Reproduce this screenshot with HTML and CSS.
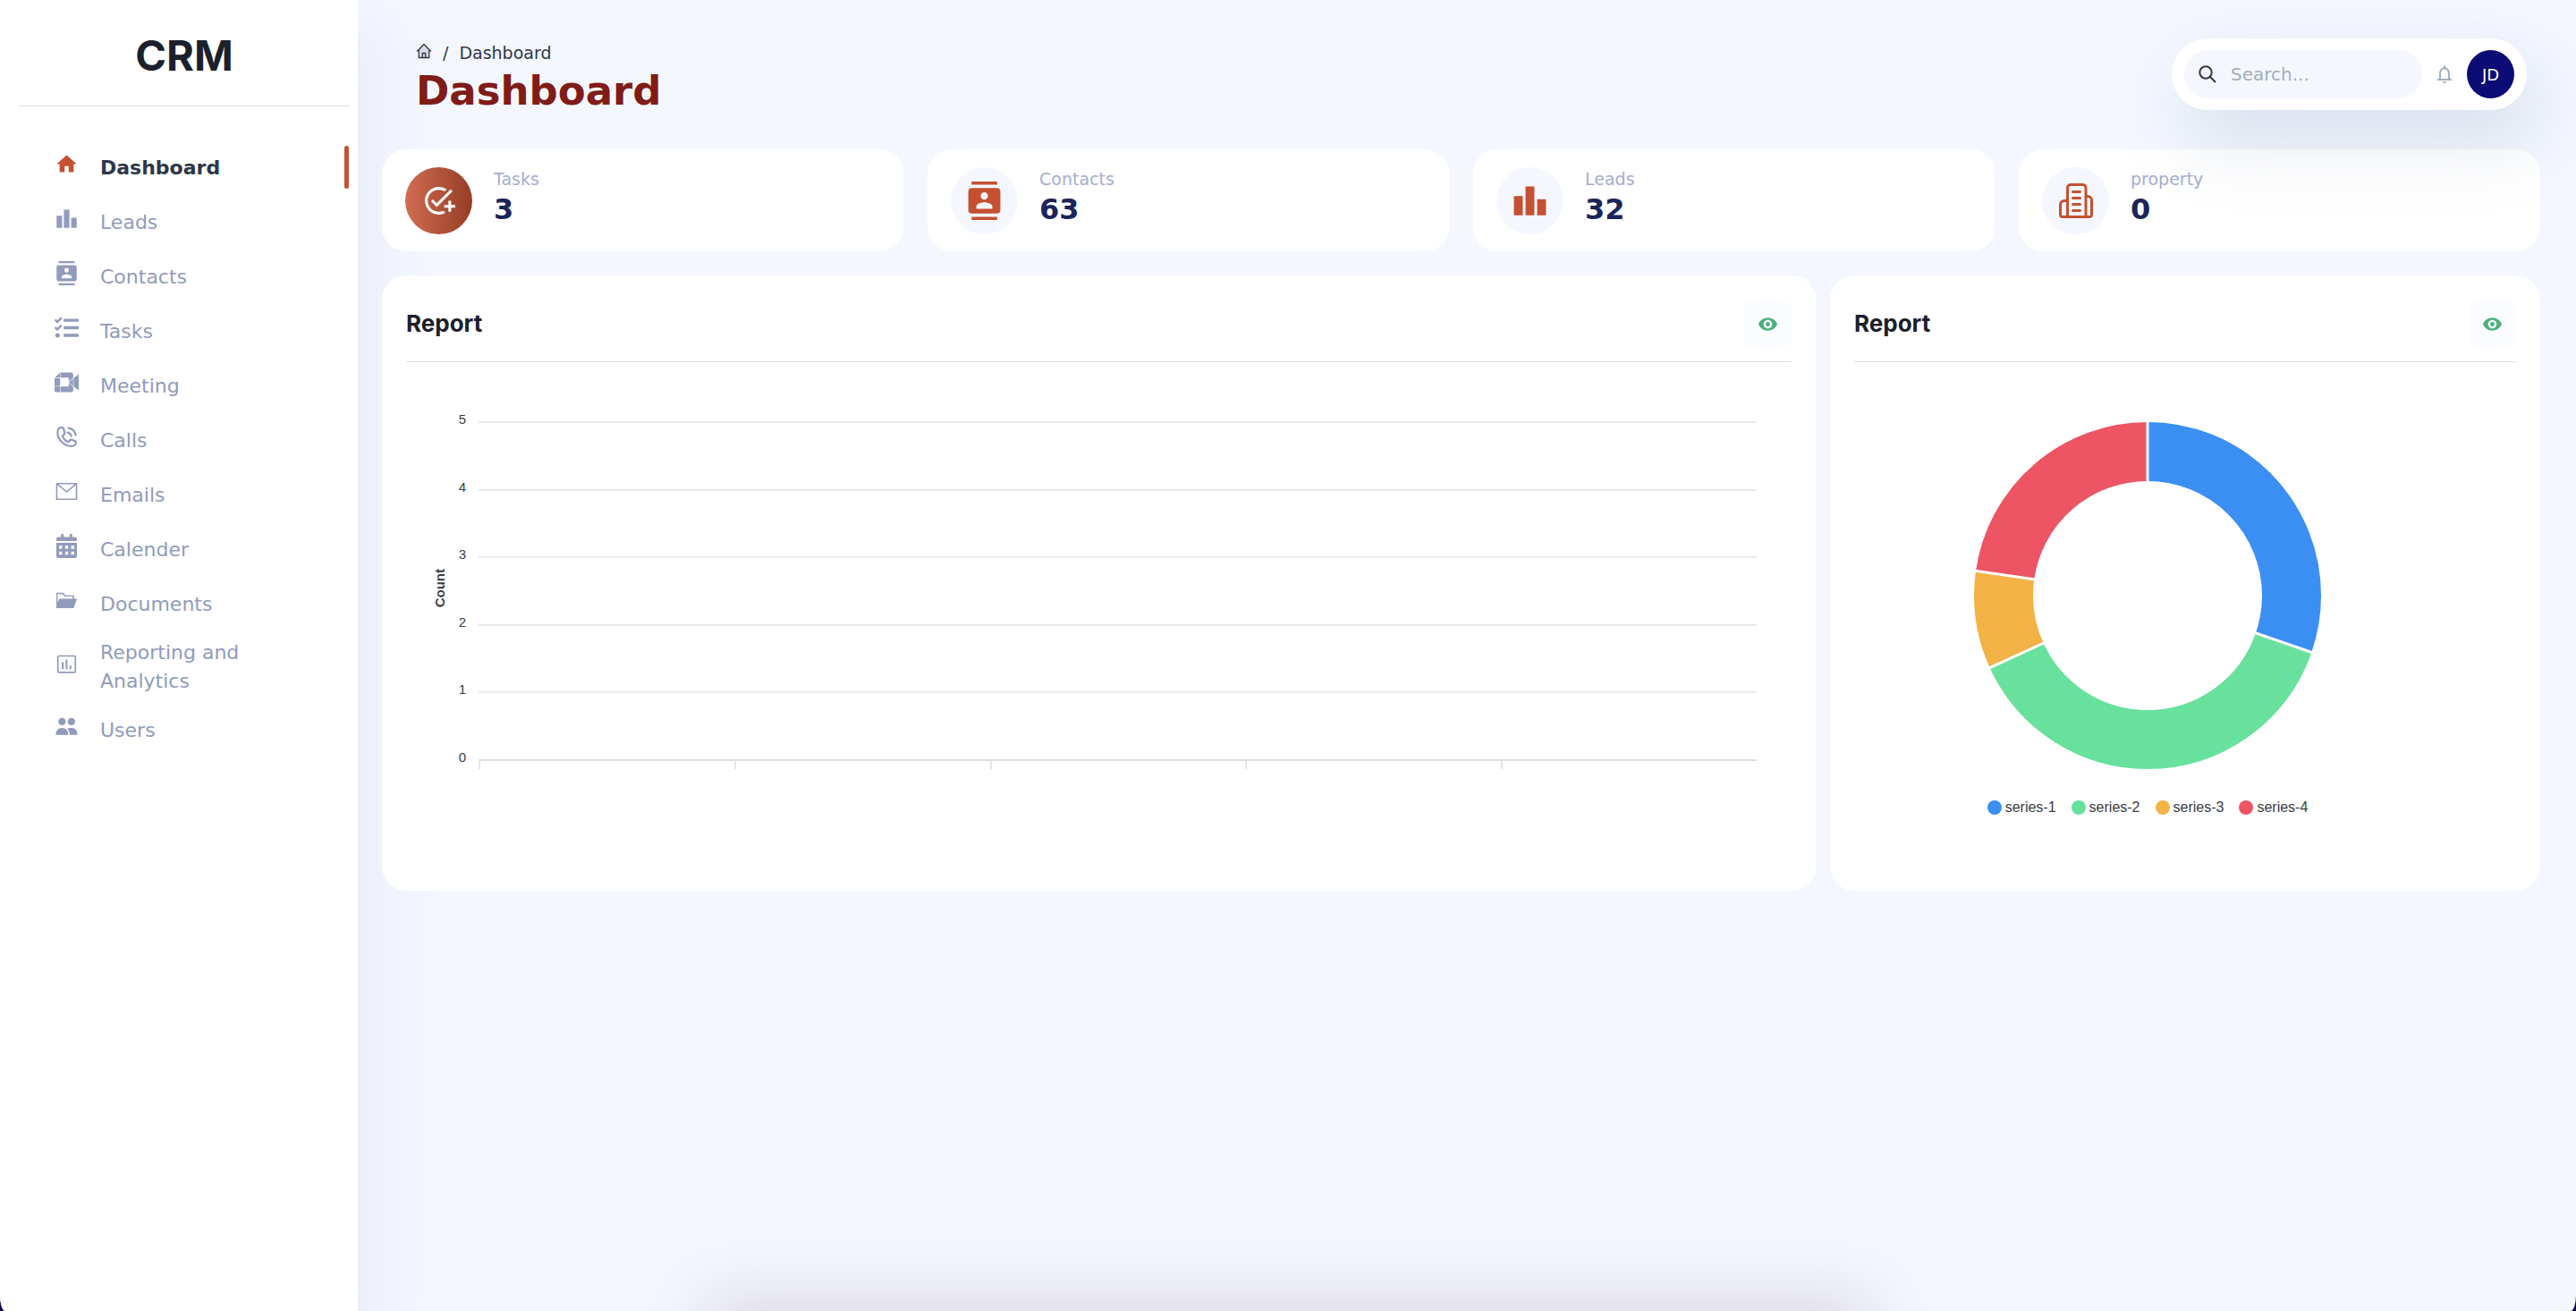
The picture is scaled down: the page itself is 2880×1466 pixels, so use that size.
FILE: index.html
```html
<!DOCTYPE html>
<html lang="en">
<head>
<meta charset="utf-8">
<meta name="viewport" content="width=device-width, initial-scale=1">
<title>CRM - Dashboard</title>
<link rel="stylesheet" href="styles.css">
</head>
<body>
<div class="app">
  <aside class="sidebar">
    <div class="brand">CRM</div>
    <nav aria-label="Main">
      <ul class="menu">
        <li><a class="menu-item active" href="#dashboard"><svg class="icon" viewBox="0 0 24 24"><path d="M10 20v-6h4v6h5v-8h3L12 3 2 12h3v8z"/></svg><span>Dashboard</span></a></li>
        <li><a class="menu-item" href="#leads"><svg class="icon" viewBox="0 0 24 24"><path d="M7.5 21H2V9h5.5v12zm7.25-18h-5.5v18h5.5V3zM22 11h-5.5v10H22V11z"/></svg><span>Leads</span></a></li>
        <li><a class="menu-item" href="#contacts"><svg class="icon" viewBox="0 0 24 24"><path d="M20 0H4v2h16V0zM4 24h16v-2H4v2zM20 4H4c-1.1 0-2 .9-2 2v12c0 1.1.9 2 2 2h16c1.1 0 2-.9 2-2V6c0-1.1-.9-2-2-2zm-8 2.75c1.24 0 2.25 1.01 2.25 2.25s-1.01 2.25-2.25 2.25S9.75 10.24 9.75 9 10.76 6.75 12 6.75zM17 17H7v-1.5c0-1.67 3.33-2.5 5-2.5s5 .83 5 2.5V17z"/></svg><span>Contacts</span></a></li>
        <li><a class="menu-item" href="#tasks"><svg class="icon" viewBox="0 0 512 512"><path d="M139.61 35.5a12 12 0 0 0-17 0L58.93 98.81l-22.7-22.12a12 12 0 0 0-17 0L3.53 92.41a12 12 0 0 0 0 17l47.59 47.4a12.78 12.78 0 0 0 17.61 0l15.59-15.62L156.52 69a12.09 12.09 0 0 0 .09-17zm0 159.19a12 12 0 0 0-17 0l-63.68 63.72-22.7-22.1a12 12 0 0 0-17 0L3.53 252a12 12 0 0 0 0 17L51 316.5a12.77 12.77 0 0 0 17.6 0l15.7-15.69 72.2-72.22a12 12 0 0 0 .09-16.9zM64 368c-26.49 0-48.59 21.5-48.59 48S37.53 464 64 464a48 48 0 0 0 0-96zm432 16H208a16 16 0 0 0-16 16v32a16 16 0 0 0 16 16h288a16 16 0 0 0 16-16v-32a16 16 0 0 0-16-16zm0-320H208a16 16 0 0 0-16 16v32a16 16 0 0 0 16 16h288a16 16 0 0 0 16-16V80a16 16 0 0 0-16-16zm0 160H208a16 16 0 0 0-16 16v32a16 16 0 0 0 16 16h288a16 16 0 0 0 16-16v-32a16 16 0 0 0-16-16z"/></svg><span>Tasks</span></a></li>
        <li><a class="menu-item" href="#meeting"><svg class="icon" viewBox="0 0 24 24"><path d="M5.5 2.2v5.2H.3zM0 7.9h5.5v7.9H0zM0 16.3h5.5v5.5H1.6A1.6 1.6 0 0 1 0 20.2zM6 2.2h10.8a1.7 1.7 0 0 1 1.7 1.7v3.7L14 11.2V7.4H6zM6 21.8h10.8a1.7 1.7 0 0 0 1.7-1.7v-3.7L14 12.8v3.5H6zM24 4.700v14.600c0 .4-.4.6-.7.3L19 16.200V7.800l4.300-3.400c.3-.3.7-.1.7.3zM18.500 8.200v7.600L14 12z"/></svg><span>Meeting</span></a></li>
        <li><a class="menu-item" href="#calls"><svg class="icon line" viewBox="0 0 24 24"><path d="M7.500 2.800C5 2.600 3 4 3 7.300 3 15 9.500 21.200 16.800 21.200c2.700 0 4.500-1.500 4.500-3.500 0-.8-.4-1.300-1.200-1.600l-3-1.100c-.8-.3-1.400-.1-1.900.5l-1.500 1.600C11.200 16.200 8.800 13.800 7.800 11.200l1.700-1.700c.5-.5.6-1.100.4-1.800L9 3.800c-.2-.6-.7-1-1.500-1z"/><path d="M13 7.600c1.900.5 3.100 1.700 3.600 3.600M14 3.200c3.600.7 6.300 3.300 7 6.900"/></svg><span>Calls</span></a></li>
        <li><a class="menu-item" href="#emails"><svg class="icon line thin" viewBox="0 0 24 24"><path d="M2.200 4.200h19.600v15.600H2.200zM2.500 4.500L12 12.500l9.500-8"/></svg><span>Emails</span></a></li>
        <li><a class="menu-item" href="#calender"><svg class="icon" viewBox="0 0 24 24"><path d="M6.500 0H9v3h6V0h2.500v3h2.700a2 2 0 0 1 2 2v2.200H1.800V5a2 2 0 0 1 2-2h2.700z"/><path fill-rule="evenodd" d="M1.800 8.800h20.400v13.200a2 2 0 0 1-2 2H3.800a2 2 0 0 1-2-2zM4.500 11.500v3.300h3v-3.300zm6 0v3.300h3v-3.300zm6 0v3.300h3v-3.300zM4.500 17.500v3.200h3v-3.200zm6 0v3.200h3v-3.200zm6 0v3.200h3v-3.200z"/></svg><span>Calender</span></a></li>
        <li><a class="menu-item" href="#documents"><svg class="icon" viewBox="0 0 24 24"><path fill-rule="evenodd" d="M1.800 4.200H8.500l2.300 2.600h8.500v3.400H22.300L19 19.500H1.800zM3 5.500v8.200l1.800-3.500H18V8h-7.800L7.800 5.500z"/></svg><span>Documents</span></a></li>
        <li><a class="menu-item" href="#reporting"><svg class="icon" viewBox="0 0 24 24"><rect x="3.300" y="4" width="17.400" height="16.400" rx="1.200" fill="none" stroke="currentColor" stroke-width="1.500"/><path d="M7.200 10.200H9V17H7.200zM11 7.500h1.800V17H11zM14.900 13.500h1.800V17h-1.800z"/></svg><span>Reporting and Analytics</span></a></li>
        <li><a class="menu-item" href="#users"><svg class="icon" viewBox="0 0 24 24"><circle cx="7.400" cy="7" r="3.700"/><circle cx="16.700" cy="7" r="3.700"/><path d="M1.200 20.300c0-4.300 2.300-7 6.200-7s6.200 2.700 6.200 7zM14.900 20.300c0-2.700-.8-4.800-2.300-6.100 1-.6 2.300-.9 4-.9 4 0 6.200 2.700 6.200 7z"/></svg><span>Users</span></a></li>
      </ul>
    </nav>
  </aside>

  <main class="main">
    <header class="topbar">
      <div class="heading">
        <nav class="crumbs" aria-label="Breadcrumb">
          <a href="#home" aria-label="Home"><svg class="crumb-home" viewBox="0 0 18 18"><path d="M3.500 8v8.300h11V8L9 2.500z" fill="#d9dade"/><path d="M1.300 9.500L9 1.500l7.700 8M3.300 8v8.500h11.400V8M7.300 16.500v-5h3.400v5" fill="none" stroke="#2d3748" stroke-width="1.300"/></svg></a>
          <span class="slash">/</span>
          <a href="#dashboard">Dashboard</a>
        </nav>
        <h1>Dashboard</h1>
      </div>
      <div class="tools">
        <label class="search">
          <svg viewBox="0 0 20 20"><circle cx="8" cy="8" r="6.700"/><path d="M12.800 12.800L19 19"/></svg>
          <input type="text" placeholder="Search..." aria-label="Search">
        </label>
        <button class="bell" type="button" aria-label="Notifications"><svg viewBox="0 0 24 24"><path d="M12 22c1.100 0 2-.9 2-2h-4c0 1.100.9 2 2 2zm6-6v-5c0-3.070-1.630-5.640-4.500-6.320V4c0-.83-.67-1.500-1.500-1.500s-1.500.67-1.500 1.500v.68C7.640 5.360 6 7.920 6 11v5l-2 2v1h16v-1l-2-2zm-2 1H8v-6c0-2.480 1.510-4.500 4-4.500s4 2.020 4 4.500v6z"/></svg></button>
        <button class="avatar" type="button">JD</button>
      </div>
    </header>

    <section class="stats">
      <article class="card stat">
        <span class="badge solid"><svg class="small" viewBox="0 0 24 24"><path d="M22 5.180L10.590 16.600l-4.240-4.240 1.410-1.410 2.830 2.830 10-10L22 5.180zM12 20c-4.410 0-8-3.590-8-8s3.590-8 8-8c1.570 0 3.040.46 4.280 1.250l1.450-1.450C16.100 2.670 14.130 2 12 2 6.480 2 2 6.480 2 12s4.480 10 10 10c1.730 0 3.360-.44 4.780-1.220l-1.500-1.500c-1 .46-2.110.72-3.280.72zm7-5h-3v2h3v3h2v-3h3v-2h-3v-3h-2v3z"/></svg></span>
        <div><p class="label">Tasks</p><p class="value">3</p></div>
      </article>
      <article class="card stat">
        <span class="badge"><svg viewBox="0 0 24 24"><path d="M20 0H4v2h16V0zM4 24h16v-2H4v2zM20 4H4c-1.1 0-2 .9-2 2v12c0 1.1.9 2 2 2h16c1.1 0 2-.9 2-2V6c0-1.1-.9-2-2-2zm-8 2.75c1.24 0 2.25 1.01 2.25 2.25s-1.01 2.25-2.25 2.25S9.75 10.24 9.75 9 10.76 6.75 12 6.75zM17 17H7v-1.5c0-1.67 3.33-2.5 5-2.5s5 .83 5 2.5V17z"/></svg></span>
        <div><p class="label">Contacts</p><p class="value">63</p></div>
      </article>
      <article class="card stat">
        <span class="badge"><svg viewBox="0 0 24 24"><path d="M7.500 21H2V9h5.500v12zm7.250-18h-5.500v18h5.500V3zM22 11h-5.500v10H22V11z"/></svg></span>
        <div><p class="label">Leads</p><p class="value">32</p></div>
      </article>
      <article class="card stat">
        <span class="badge"><svg class="building" viewBox="0 0 43 43"><path d="M12.500 39.500V7a3.500 3.500 0 0 1 3.500-3.500h13.500A3.500 3.500 0 0 1 33 7v32.500M12.500 21.500H9A4.500 4.500 0 0 0 4.500 26v11A2.500 2.500 0 0 0 7 39.500h30a2.500 2.500 0 0 0 2.500-2.500V21a4.500 4.500 0 0 0-4.500-4.500h-2M18.500 11.500h8M18.500 18.500h8M18.500 25.500h8M18.500 32.500h8"/></svg></span>
        <div><p class="label">property</p><p class="value">0</p></div>
      </article>
    </section>

    <section class="reports">
      <article class="card report">
        <header class="report-head"><h2>Report</h2><button class="view" type="button" aria-label="View report"><svg viewBox="0 0 24 24"><path d="M12 4.500C7 4.500 2.730 7.610 1 12c1.730 4.390 6 7.500 11 7.500s9.270-3.110 11-7.500c-1.730-4.390-6-7.500-11-7.500zM12 17c-2.760 0-5-2.240-5-5s2.240-5 5-5 5 2.240 5 5-2.240 5-5 5zm0-7.500a2.500 2.500 0 1 0 0 5 2.500 2.500 0 0 0 0-5z"/></svg></button></header>
        <div class="bar-chart">
          <div class="axis-title">Count</div>
          <div class="axis"><span>5</span><span>4</span><span>3</span><span>2</span><span>1</span><span>0</span></div>
          <div class="plot">
            <div class="lines"><i></i><i></i><i></i><i></i><i></i></div>
            <div class="ticks"><i></i><i></i><i></i><i></i><i></i></div>
          </div>
        </div>
      </article>
      <article class="card report">
        <header class="report-head"><h2>Report</h2><button class="view" type="button" aria-label="View report"><svg viewBox="0 0 24 24"><path d="M12 4.500C7 4.500 2.730 7.610 1 12c1.730 4.390 6 7.500 11 7.500s9.270-3.110 11-7.500c-1.730-4.390-6-7.500-11-7.500zM12 17c-2.760 0-5-2.240-5-5s2.240-5 5-5 5 2.240 5 5-2.240 5-5 5zm0-7.500a2.500 2.500 0 1 0 0 5 2.500 2.500 0 0 0 0-5z"/></svg></button></header>
        <figure class="donut-chart">
          <svg class="donut" viewBox="-195 -195 390 390">
            <g fill="none" stroke-width="66" transform="rotate(-90)">
              <circle r="161" pathLength="66" stroke="#3b8ff3" stroke-dasharray="20 46"/>
              <circle r="161" pathLength="66" stroke="#68e19d" stroke-dasharray="25 41" stroke-dashoffset="-20"/>
              <circle r="161" pathLength="66" stroke="#f3b245" stroke-dasharray="6 60" stroke-dashoffset="-45"/>
              <circle r="161" pathLength="66" stroke="#ed5565" stroke-dasharray="15 51" stroke-dashoffset="-51"/>
            </g>
            <g stroke="#fff" stroke-width="3">
              <path d="M0-120V-195"/><path d="M0-120V-195" transform="rotate(109.090)"/><path d="M0-120V-195" transform="rotate(245.450)"/><path d="M0-120V-195" transform="rotate(278.180)"/>
            </g>
          </svg>
          <figcaption class="legend">
            <span class="key blue">series-1</span><span class="key green">series-2</span><span class="key amber">series-3</span><span class="key red">series-4</span>
          </figcaption>
        </figure>
      </article>
    </section>
  </main>
  <div class="glow"></div>
</div>
</body>
</html>
```

FILE: styles.css
```css
* { box-sizing: border-box; margin: 0; padding: 0; }
html { background: #170a4a; }
body { font-family: "DejaVu Sans", Verdana, sans-serif; color: #1b202b; }
a { color: inherit; text-decoration: none; }
ul { list-style: none; }
button, input { font: inherit; border: 0; background: none; }
svg { display: block; fill: currentColor; }

.app {
  position: relative;
  display: flex;
  min-height: 100vh;
  background: #f4f7fe;
  border-radius: 0 0 6px 6px / 0 0 18px 18px;
  overflow: hidden;
}

/* Sidebar */
.sidebar {
  flex: 0 0 400px;
  padding: 0 9px 0 21px;
  background: #fff;
  box-shadow: 20px 34px 70px 8px rgba(112, 128, 180, 0.08);
}
.brand {
  height: 119px;
  padding-top: 32px;
  border-bottom: 1px solid #dcddec;
  font: bold 47px/60px Inter, sans-serif;
  text-align: center;
}
.menu { padding-top: 38px; }
.menu-item {
  display: flex;
  align-items: center;
  gap: 24px;
  min-height: 61px;
  padding: 8px 95px 8px 40px;
  border-right: 5px solid transparent;
  font-size: 22px;
  line-height: 32px;
  color: #8f9bba;
}
.menu-item.active {
  position: relative;
  font-weight: bold;
  color: #2d3748;
}
.menu-item.active::after {
  content: "";
  position: absolute;
  top: 6px;
  right: -4px;
  width: 5px;
  height: 48px;
  border-radius: 3px;
  background: #c45131;
}
.menu-item .icon { flex: none; width: 27px; height: 35px; padding-bottom: 8px; color: #919bbb; }
.menu-item.active .icon { color: #c45131; }
.icon.line { fill: none; stroke: currentColor; stroke-width: 2; stroke-linecap: round; }
.icon.thin { stroke-width: 1.4px; }

/* Main area */
.main { flex: 1; min-width: 0; padding: 43px 40px 40px 27px; }
.topbar {
  display: flex;
  justify-content: space-between;
  align-items: flex-start;
  height: 124px;
  padding: 0 15px 0 38px;
}
.heading { position: relative; }
.crumbs {
  display: flex;
  align-items: center;
  gap: 12px;
  height: 32px;
  font-size: 19px;
  color: #2d3748;
}
.crumb-home { width: 18px; height: 22px; padding-bottom: 4px; }
h1 { font-size: 45px; line-height: 54px; color: #801c17; }

.tools {
  position: relative;
  display: flex;
  align-items: center;
  height: 80px;
  padding: 13px 14px;
  border-radius: 40px;
  background: #fff;
  box-shadow: 14px 34px 80px 4px rgba(112, 134, 170, 0.2);
}
.search {
  display: flex;
  align-items: center;
  gap: 16px;
  width: 266px;
  height: 54px;
  padding: 0 16px;
  border-radius: 27px;
  background: #f4f7fe;
}
.search svg { flex: none; width: 20px; height: 20px; fill: none; stroke: #2d3748; stroke-width: 2; }
.search input { width: 100%; min-width: 0; font-size: 20px; outline: 0; }
.search input::placeholder { color: #a0aec0; opacity: 1; }
.bell { margin: 0 13px; color: #a0aec0; }
.bell svg { width: 24px; height: 24px; }
.avatar {
  width: 53px;
  height: 54px;
  border-radius: 50%;
  background: #0b0b75;
  color: #fff;
  font-size: 18px;
}

.card { background: #fff; border-radius: 27px; }

/* Summary cards */
.stats { display: grid; grid-template-columns: repeat(4, 1fr); gap: 27px; }
.stat { display: flex; align-items: center; gap: 24px; height: 114px; padding: 0 26px; }
.badge {
  display: grid;
  place-items: center;
  width: 75px;
  height: 75px;
  border-radius: 50%;
  background: #f4f7fe;
  color: #c45131;
}
.badge svg { width: 43px; height: 43px; }
.badge.solid { background: linear-gradient(90deg, #cf6d52, #963d26); color: #fff; }
.badge svg.small { width: 37px; height: 37px; }
.badge svg.building {
  fill: none;
  stroke: currentColor;
  stroke-width: 3;
  stroke-linecap: round;
  stroke-linejoin: round;
}
.label { font-size: 19px; line-height: 24px; color: #a3aed0; }
.value { padding-bottom: 4px; font-size: 32px; line-height: 44px; font-weight: bold; color: #1b2559; }

/* Report cards */
.reports {
  display: grid;
  grid-template-columns: 1603fr 794fr;
  gap: 16px;
  margin-top: 27px;
}
.report { min-height: 688px; padding: 27px; }
.report-head {
  display: flex;
  justify-content: space-between;
  height: 70px;
  border-bottom: 1px solid #dcddea;
}
h2 { font: bold 26px/54px Inter, sans-serif; }
.view {
  display: grid;
  place-items: center;
  width: 54px;
  height: 54px;
  border-radius: 13px;
  background: #fafcff;
  color: #4cb07a;
}
.view svg { width: 23px; height: 23px; }

.bar-chart {
  display: flex;
  padding: 66px 39px 0 30px;
  font: 15px/16px "Liberation Sans", Arial, sans-serif;
  color: #373d3f;
}
.axis-title {
  align-self: center;
  margin-bottom: 16px;
  writing-mode: vertical-rl;
  transform: rotate(180deg);
  font-weight: bold;
}
.axis {
  display: flex;
  flex-direction: column;
  justify-content: space-between;
  width: 21px;
  height: 394px;
  margin: -10px 14px 0 0;
  text-align: right;
}
.plot { flex: 1; }
.lines { display: grid; grid-template-rows: repeat(5, 1fr); height: 378px; }
.lines i { border-top: 2px solid #e9e9e9; }
.ticks {
  display: grid;
  grid-template-columns: repeat(5, 1fr);
  height: 11px;
  border-top: 2px solid #e0e0e0;
}
.ticks i { border-left: 2px solid #e6e6e6; }

.donut-chart {
  display: flex;
  flex-direction: column;
  align-items: center;
  padding: 66px 84px 0 0;
}
.donut { width: 390px; height: 390px; }
.legend {
  display: flex;
  gap: 17px;
  margin-top: 32px;
  font: 16px/20px "Liberation Sans", Arial, sans-serif;
  color: #373d3f;
}
.key { display: flex; align-items: center; gap: 4px; }
.key::before { content: ""; width: 16px; height: 16px; border-radius: 50%; }
.key.blue::before { background: #3b8ff3; }
.key.green::before { background: #68e19d; }
.key.amber::before { background: #f3b245; }
.key.red::before { background: #ed5565; }

/* Soft shade along the bottom edge */
.glow {
  position: absolute;
  left: 28%;
  right: 28%;
  bottom: -40px;
  height: 30px;
  box-shadow: 0 0 80px 16px rgba(110, 80, 90, 0.24);
}
```
